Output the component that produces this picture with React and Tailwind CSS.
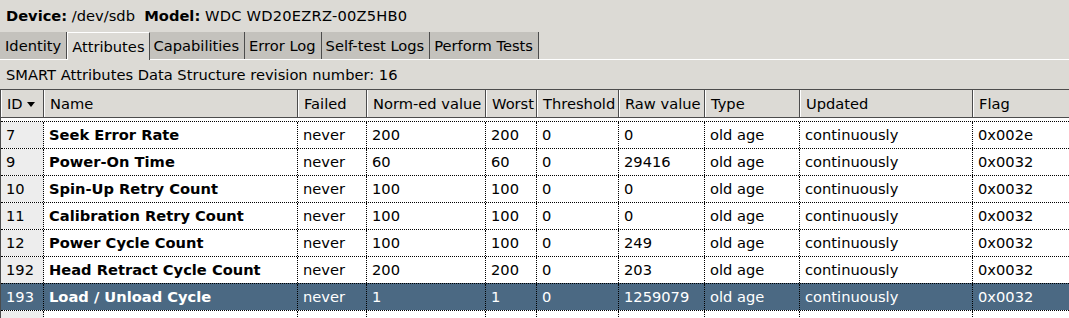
import React from 'react';

const columns = [
  { key: 'id', label: 'ID', w: 'w-[43px]' },
  { key: 'name', label: 'Name', w: 'w-[254px]' },
  { key: 'failed', label: 'Failed', w: 'w-[69px]' },
  { key: 'norm', label: 'Norm-ed value', w: 'w-[119px]' },
  { key: 'worst', label: 'Worst', w: 'w-[51px]' },
  { key: 'thresh', label: 'Threshold', w: 'w-[82px]' },
  { key: 'raw', label: 'Raw value', w: 'w-[86px]' },
  { key: 'type', label: 'Type', w: 'w-[95px]' },
  { key: 'updated', label: 'Updated', w: 'w-[173px]' },
  { key: 'flag', label: 'Flag', w: 'w-[120px]' },
];

const rows = [
  ['7', 'Seek Error Rate', 'never', '200', '200', '0', '0', 'old age', 'continuously', '0x002e'],
  ['9', 'Power-On Time', 'never', '60', '60', '0', '29416', 'old age', 'continuously', '0x0032'],
  ['10', 'Spin-Up Retry Count', 'never', '100', '100', '0', '0', 'old age', 'continuously', '0x0032'],
  ['11', 'Calibration Retry Count', 'never', '100', '100', '0', '0', 'old age', 'continuously', '0x0032'],
  ['12', 'Power Cycle Count', 'never', '100', '100', '0', '249', 'old age', 'continuously', '0x0032'],
  ['192', 'Head Retract Cycle Count', 'never', '200', '200', '0', '203', 'old age', 'continuously', '0x0032'],
  ['193', 'Load / Unload Cycle', 'never', '1', '1', '0', '1259079', 'old age', 'continuously', '0x0032'],
];

const tabs = ['Identity', 'Attributes', 'Capabilities', 'Error Log', 'Self-test Logs', 'Perform Tests'];

export default function App() {
  return (
    <div className="w-[1069px] h-[318px] overflow-hidden bg-[#dcdad5] text-[14.67px] text-black font-['DejaVu_Sans',sans-serif]">
      {/* device line */}
      <div className="h-[32px] flex items-center pl-[6px] pb-[1px] whitespace-pre">
        <span className="font-bold">Device:</span>
        <span> /dev/sdb  </span>
        <span className="font-bold">Model:</span>
        <span className="tracking-[0.2px]"> WDC WD20EZRZ-00Z5HB0</span>
      </div>

      {/* tabs */}
      <div className="h-[28px] flex items-end border-b border-white">
        {tabs.map((t, ti) => {
          const active = t === 'Attributes';
          return active ? (
            <div key={t} className="h-[28px] -mb-px px-[4px] flex items-center bg-[#dcdad5] border-t border-l border-white border-r border-r-[#4c4c4c]">
              {t}
            </div>
          ) : (
            <div key={t} className={`h-[27px] pr-[5px] flex items-center bg-[#c4c2bd] border-r border-[#4c4c4c] ${ti === 0 ? 'pl-[5px]' : 'pl-[4px]'}`}>
              {t}
            </div>
          );
        })}
      </div>

      {/* revision line */}
      <div className="h-[29px] flex items-center pl-[6px]">
        SMART Attributes Data Structure revision number: 16
      </div>

      {/* table */}
      <div className="border-l border-[#4c4c4c]">
        <div className="flex h-[29px] border-t border-b border-[#4c4c4c] bg-[#dcdad5]">
          {columns.map((c, i) => (
            <div
              key={c.key}
              className={`${c.w} shrink-0 flex items-center gap-[4px] pl-[5px] border-l border-white ${i < columns.length - 1 ? 'border-r border-r-[#4c4c4c]' : ''}`}
            >
              <span>{c.label}</span>
              {c.key === 'id' && (
                <svg width="8" height="5" viewBox="0 0 8 5" className="mt-[1px]">
                  <path d="M0 0 L8 0 L4 5 Z" fill="#000" />
                </svg>
              )}
            </div>
          ))}
        </div>

        <div className="bg-white pt-[3px]">
          {rows.map((r, ri) => {
            const sel = ri === rows.length - 1;
            return (
              <div
                key={r[0]}
                className={`flex h-[27px] border-t border-dotted border-black ${sel ? 'bg-[#4b6983] text-white' : ''}`}
              >
                {columns.map((c, i) => (
                  <div
                    key={c.key}
                    className={`${c.w} shrink-0 flex items-center pl-[5px] whitespace-nowrap ${i < columns.length - 1 ? 'border-r border-dotted border-black' : ''} ${i === 1 ? 'font-bold' : ''} ${i === 0 && !sel ? 'bg-[#ededed]' : ''}`}
                  >
                    {r[i]}
                  </div>
                ))}
              </div>
            );
          })}
          <div className="flex h-[27px] border-t border-dotted border-black">
            {columns.map((c, i) => (
              <div
                key={c.key}
                className={`${c.w} shrink-0 ${i < columns.length - 1 ? 'border-r border-dotted border-black' : ''} ${i === 0 ? 'bg-[#ededed]' : ''}`}
              />
            ))}
          </div>
        </div>
      </div>
    </div>
  );
}
